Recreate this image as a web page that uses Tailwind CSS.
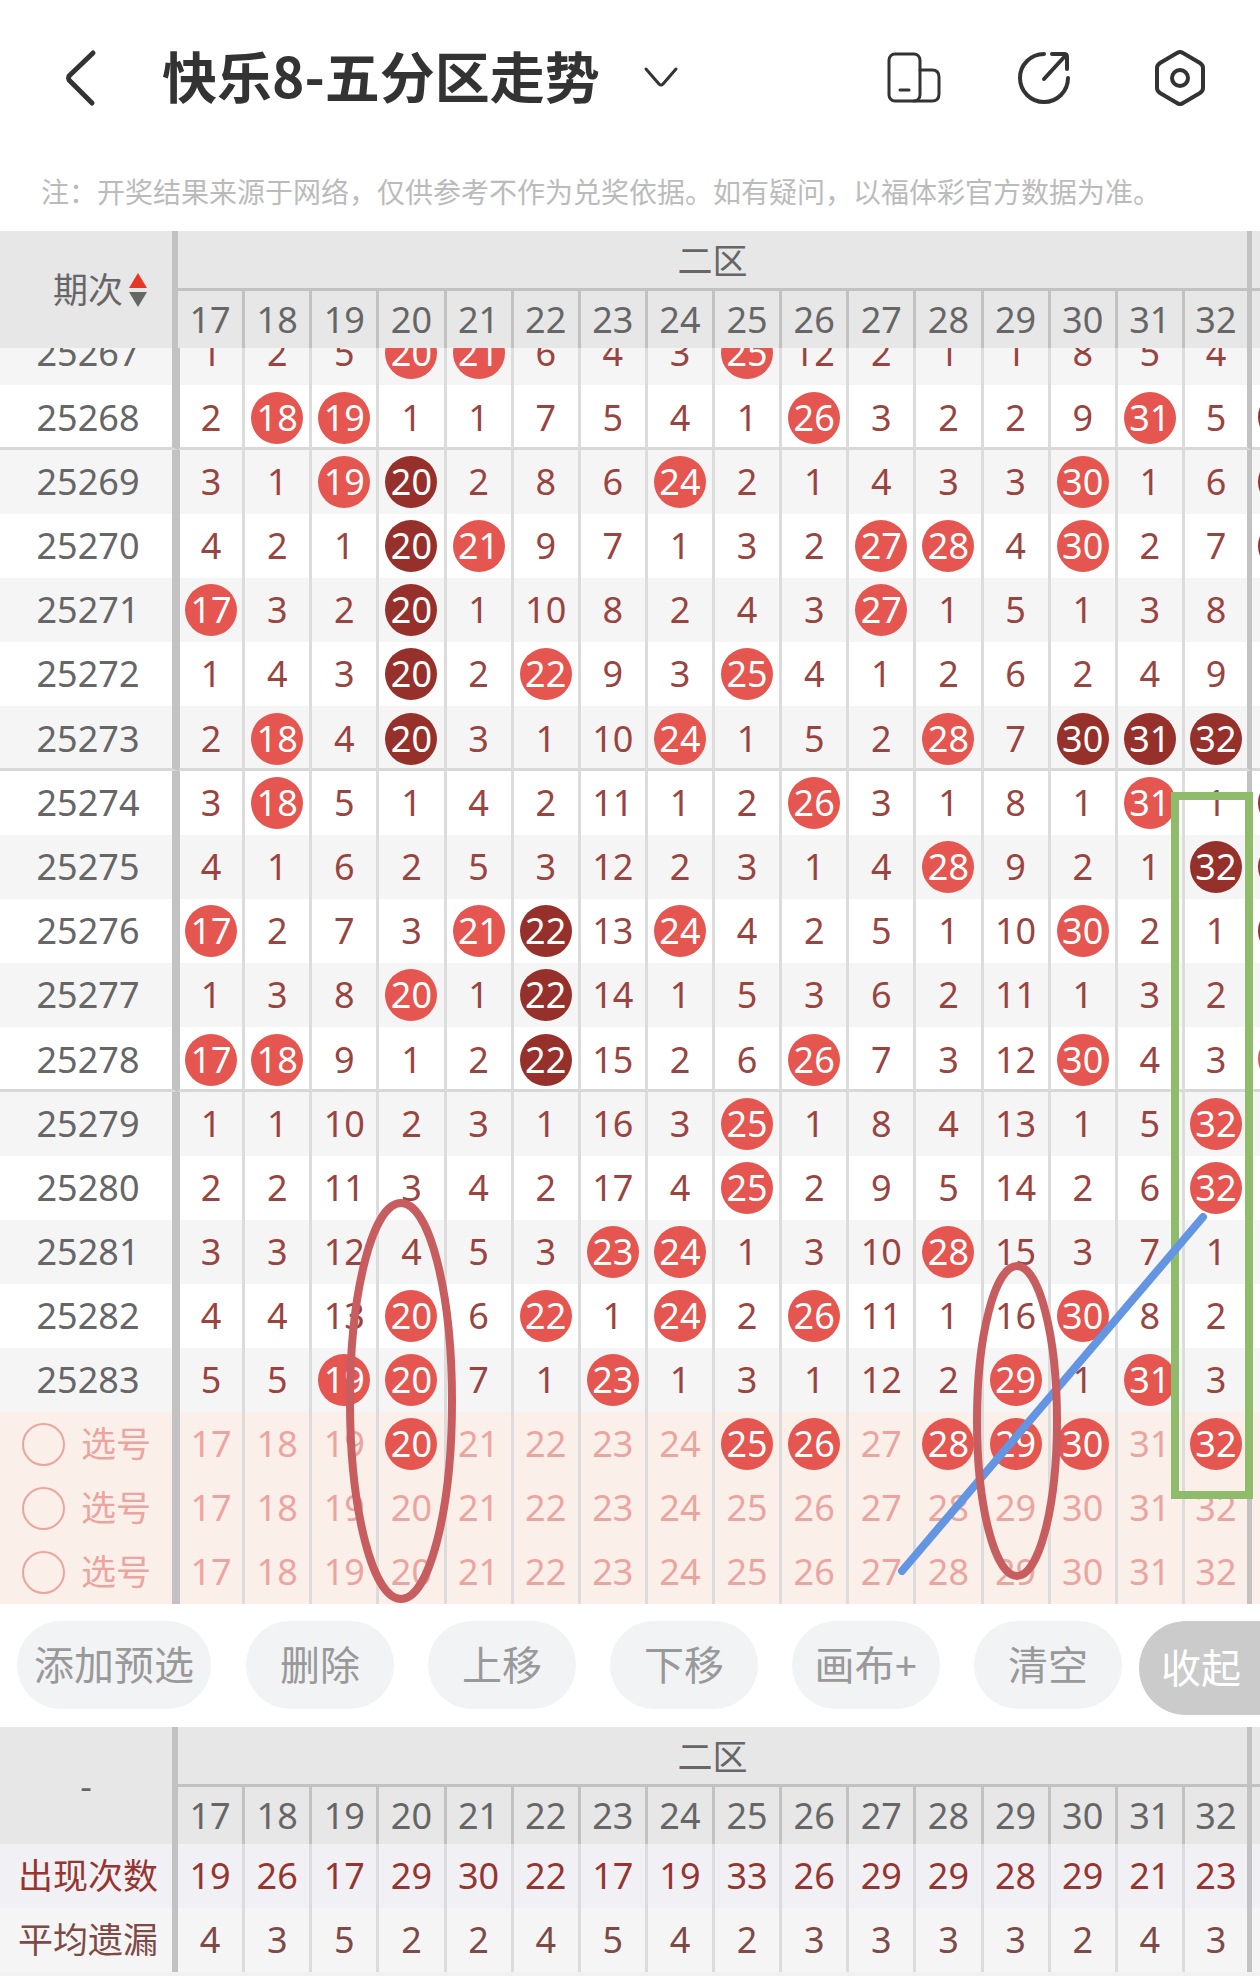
<!DOCTYPE html>
<html lang="zh-CN">
<head>
  <meta charset="UTF-8">
  <meta name="viewport" content="width=device-width, initial-scale=1.0">
  <title>快乐8-五分区走势</title>
  <script src="https://cdn.jsdelivr.net/npm/@tailwindcss/browser@4"></script>
</head>
<body class="bg-white min-h-screen flex flex-col overflow-x-hidden font-['Noto_Sans','Noto_Sans_CJK_SC',sans-serif] text-[#666]">

  <!-- Title bar -->
  <header class="flex items-center h-[156px] pl-[64px] pr-[52px] text-[#333]">
    <button aria-label="返回">
      <svg class="w-[34px] h-[60px]" viewBox="0 0 34 60" fill="none" stroke="currentColor" stroke-width="5" stroke-linecap="round" stroke-linejoin="round">
        <path d="M29 5 L5 28 Q4 30 5 32 L28 55"/>
      </svg>
    </button>
    <h1 class="ml-[64px] pb-2 text-[55px] leading-[60px] font-bold whitespace-nowrap font-['Noto_Sans_CJK_SC',sans-serif]">快乐8-五分区走势</h1>
    <button class="ml-[43px]" aria-label="切换走势">
      <svg class="w-[36px] h-[24px]" viewBox="0 0 36 24" fill="none" stroke="currentColor" stroke-width="3" stroke-linecap="round" stroke-linejoin="round">
        <path d="M3 3 L16 18 Q18 20 20 18 L33 3"/>
      </svg>
    </button>
    <div class="ml-auto flex items-center">
      <button aria-label="横屏">
        <svg class="w-[56px] h-[56px]" viewBox="0 0 56 56" fill="none" stroke="currentColor" stroke-width="3" stroke-linecap="round" stroke-linejoin="round">
          <rect x="3" y="4" width="31" height="47" rx="6"/>
          <path d="M34 20 H46 Q53 20 53 27 V44 Q53 51 46 51 H28"/>
          <path d="M14 40 H23"/>
        </svg>
      </button>
      <button class="ml-[74px]" aria-label="分享">
        <svg class="w-[56px] h-[56px]" viewBox="0 0 56 56" fill="none" stroke="currentColor" stroke-width="4" stroke-linecap="round" stroke-linejoin="round">
          <path d="M28 4 A24 24 0 1 0 52 28"/>
          <path d="M36 4 H48 Q51 4 51 7 V19"/>
          <path d="M50 5 L28 29"/>
        </svg>
      </button>
      <button class="ml-[80px]" aria-label="设置">
        <svg class="w-[56px] h-[56px]" viewBox="0 0 56 56" fill="none" stroke="currentColor" stroke-width="4" stroke-linejoin="round">
          <path d="M25 3 Q28 1 31 3 L48 13 Q51 15 51 18 V38 Q51 41 48 43 L31 53 Q28 55 25 53 L8 43 Q5 41 5 38 V18 Q5 15 8 13 Z"/>
          <circle cx="28" cy="28" r="8"/>
        </svg>
      </button>
    </div>
  </header>

  <p class="h-[75px] pt-[15px] pl-[41px] text-[28px] leading-[40px] text-[#bbb] whitespace-nowrap font-['Noto_Sans_CJK_SC',sans-serif]">注：开奖结果来源于网络，仅供参考不作为兑奖依据。如有疑问，以福体彩官方数据为准。</p>

  <!-- Column heads -->
  <table class="w-full table-fixed border-separate border-spacing-0 bg-[#e7e7e7] text-[36px] leading-[44px]">
    <thead id="mainHead"></thead>
  </table>

  <!-- Draw rows, scrolled a little under the heads -->
  <div class="relative overflow-hidden">
    <table class="-mt-[27px] w-full table-fixed border-separate border-spacing-0 text-[36px] leading-[44px]">
      <tbody id="draws"></tbody>
    </table>
    <!-- Marks drawn by the user -->
    <svg class="absolute inset-0 w-full h-full pointer-events-none" viewBox="0 0 1260 1256" preserveAspectRatio="none" fill="none" stroke-width="8">
      <rect x="1175" y="448" width="74" height="699" stroke="#8fbc6a"/>
      <path d="M1203 869 L902 1223" stroke="#6395e2" stroke-linecap="round"/>
      <ellipse cx="401" cy="1053" rx="51" ry="198" stroke="#c85d5f"/>
      <ellipse cx="1017" cy="1073" rx="40" ry="155" stroke="#c85d5f"/>
    </svg>
  </div>

  <!-- Actions -->
  <div class="flex items-start h-[123px] pt-[17px] pl-[17px] text-[40px] leading-[48px] text-[#999]">
    <button class="h-[88px] w-[194px] shrink-0 rounded-full bg-[#f1f3f5] whitespace-nowrap">添加预选</button>
    <div class="flex flex-1 gap-[34px] pl-[35px]">
      <button class="h-[88px] flex-1 rounded-full bg-[#f1f3f5]">删除</button>
      <button class="h-[88px] flex-1 rounded-full bg-[#f1f3f5]">上移</button>
      <button class="h-[88px] flex-1 rounded-full bg-[#f1f3f5]">下移</button>
      <button class="h-[88px] flex-1 rounded-full bg-[#f1f3f5]">画布+</button>
      <button class="h-[88px] flex-1 rounded-full bg-[#f1f3f5]">清空</button>
    </div>
    <button class="ml-[17px] h-[94px] w-[121px] shrink-0 rounded-l-full bg-[#cbcbcb] pl-[22px] text-left text-white whitespace-nowrap">收起</button>
  </div>

  <!-- Statistics -->
  <table class="w-full table-fixed border-separate border-spacing-0 bg-[#e7e7e7] text-[36px] leading-[44px]">
    <thead id="statHead"></thead>
    <tbody id="stats"></tbody>
  </table>
  <div class="flex-1 bg-[#f1f0f5]"></div>

  <script>
    // "*" is a drawn number, "#" a drawn number in a long streak.
    // The last value of a row is the first column of the next zone.
    const draws = [
      ['25267', '1 2 5 *20 *21 6 4 3 *25 12 2 1 1 8 5 4 -'],
      ['25268', '2 *18 *19 1 1 7 5 4 1 *26 3 2 2 9 *31 5 #'],
      ['25269', '3 1 *19 #20 2 8 6 *24 2 1 4 3 3 *30 1 6 #'],
      ['25270', '4 2 1 #20 *21 9 7 1 3 2 *27 *28 4 *30 2 7 #'],
      ['25271', '*17 3 2 #20 1 10 8 2 4 3 *27 1 5 1 3 8 -'],
      ['25272', '1 4 3 #20 2 *22 9 3 *25 4 1 2 6 2 4 9 -'],
      ['25273', '2 *18 4 #20 3 1 10 *24 1 5 2 *28 7 #30 #31 #32 -'],
      ['25274', '3 *18 5 1 4 2 11 1 2 *26 3 1 8 1 *31 1 #'],
      ['25275', '4 1 6 2 5 3 12 2 3 1 4 *28 9 2 1 #32 #'],
      ['25276', '*17 2 7 3 *21 #22 13 *24 4 2 5 1 10 *30 2 1 #'],
      ['25277', '1 3 8 *20 1 #22 14 1 5 3 6 2 11 1 3 2 -'],
      ['25278', '*17 *18 9 1 2 #22 15 2 6 *26 7 3 12 *30 4 3 *'],
      ['25279', '1 1 10 2 3 1 16 3 *25 1 8 4 13 1 5 *32 -'],
      ['25280', '2 2 11 3 4 2 17 4 *25 2 9 5 14 2 6 *32 -'],
      ['25281', '3 3 12 4 5 3 *23 *24 1 3 10 *28 15 3 7 1 -'],
      ['25282', '4 4 13 *20 6 *22 1 *24 2 *26 11 1 16 *30 8 2 -'],
      ['25283', '5 5 *19 *20 7 1 *23 1 3 1 12 2 *29 1 *31 3 -']
    ];
    const picks = [
      '17 18 19 *20 21 22 23 24 *25 *26 27 *28 *29 *30 31 *32 -',
      '17 18 19 20 21 22 23 24 25 26 27 28 29 30 31 32 -',
      '17 18 19 20 21 22 23 24 25 26 27 28 29 30 31 32 -'
    ];
    const stats = [
      ['出现次数', '19 26 17 29 30 22 17 19 33 26 29 29 28 29 21 23 -', 'bg-[#f1f0f5] text-[#953530]'],
      ['平均遗漏', '4 3 5 2 2 4 5 4 2 3 3 3 3 2 4 3 -', 'bg-[#f5f5f5] text-[#7d4a46]']
    ];

    const sideCell = 'w-[178px] py-0 pr-0 border-r-[6px] border-r-[#c2c2c2] font-normal whitespace-nowrap';
    const ball = 'mx-auto block size-[52px] leading-[52px] rounded-full bg-[#e4564f] text-white';
    const darkBall = 'mx-auto block size-[52px] leading-[52px] rounded-full bg-[#96302b] text-white';
    const edgeBall = 'absolute left-[6px] top-[6px] size-[52px] rounded-full bg-[#e4564f]';
    const darkEdgeBall = 'absolute left-[6px] top-[6px] size-[52px] rounded-full bg-[#96302b]';

    function cells(values, lineClass, thickStart) {
      return values.split(' ').map((v, i) => {
        if (i === 16) {
          const edge = v === '#' ? darkEdgeBall : edgeBall;
          return `<td class="relative w-[8px] overflow-hidden px-0 ${lineClass}">${v === '-' ? '' : `<i class="${edge}"></i>`}</td>`;
        }
        let side = i === 15 ? 'border-r-[5px] border-r-[#c2c2c2]' : 'border-r-[3px] border-r-[#dcdcdc]';
        if (i === 0 && thickStart) side += ' border-l-2 border-l-[#c2c2c2]';
        let text = v;
        if (v[0] === '*') text = `<span class="${ball}">${v.slice(1)}</span>`;
        if (v[0] === '#') text = `<span class="${darkBall}">${v.slice(1)}</span>`;
        return `<td class="px-0 text-center ${side} ${lineClass}">${text}</td>`;
      }).join('');
    }

    function head(corner) {
      let numbers = '';
      for (let n = 17; n <= 32; n++) {
        const side = n === 32 ? 'border-r-[5px]' : 'border-r-[3px]';
        numbers += `<th class="p-0 font-normal border-[#c2c2c2] ${side}">${n}</th>`;
      }
      return `
        <tr class="h-[60px]">
          <th rowspan="2" class="${sideCell}">${corner}</th>
          <th colspan="16" class="px-0 pt-[2px] pb-0 text-[35px] font-normal border-[#c2c2c2] border-b-[3px] border-r-[5px]">二区</th>
          <th class="w-[8px] p-0 border-[#c2c2c2] border-b-[3px]"></th>
        </tr>
        <tr class="h-[57px]">${numbers}<th class="p-0"></th></tr>`;
    }

    document.getElementById('mainHead').innerHTML = head(`
      <button class="flex items-center gap-[6px] pl-[53px] text-[35px]">期次
        <svg class="w-[18px] h-[36px]" viewBox="0 0 18 36"><path d="M9 1 L18 16 H0 Z" fill="#e83626"/><path d="M9 35 L18 20 H0 Z" fill="#666"/></svg>
      </button>`);
    document.getElementById('statHead').innerHTML = head('-');

    document.getElementById('draws').innerHTML = draws.map(([issue, values], i) => {
      const stripe = i % 2 ? 'bg-white' : 'bg-[#f5f5f5]';
      // a line closes every group of five draws
      const groupEnd = i % 5 === 1 && i < 16;
      const height = groupEnd ? 'h-[65px]' : 'h-[64px]';
      const line = groupEnd ? 'pt-[3px] pb-0 border-b-[3px] border-b-[#d8d8d8]' : 'py-0';
      return `<tr class="${height} ${stripe} text-[#9a4440]">
        <th class="${sideCell} ${line} pl-1 text-[#666]">${issue}</th>${cells(values, line, true)}</tr>`;
    }).join('') + picks.map((values, i) => `
      <tr class="h-[64px] bg-[#fbefe9] text-[#eba5a1]">
        <th class="${sideCell} pl-0">
          <label class="flex items-center gap-4 pl-[22px] text-[35px]">
            <input type="radio" name="pick" value="${i}" class="appearance-none size-[43px] rounded-full border-2 border-[#eba5a1]">选号
          </label>
        </th>${cells(values, 'py-0', true)}</tr>`).join('');

    document.getElementById('stats').innerHTML = stats.map(([name, values, color]) => `
      <tr class="h-[64px] ${color}"><th class="${sideCell} pl-1 text-[35px]">${name}</th>${cells(values, 'py-0', false)}</tr>`).join('');
  </script>
</body>
</html>
